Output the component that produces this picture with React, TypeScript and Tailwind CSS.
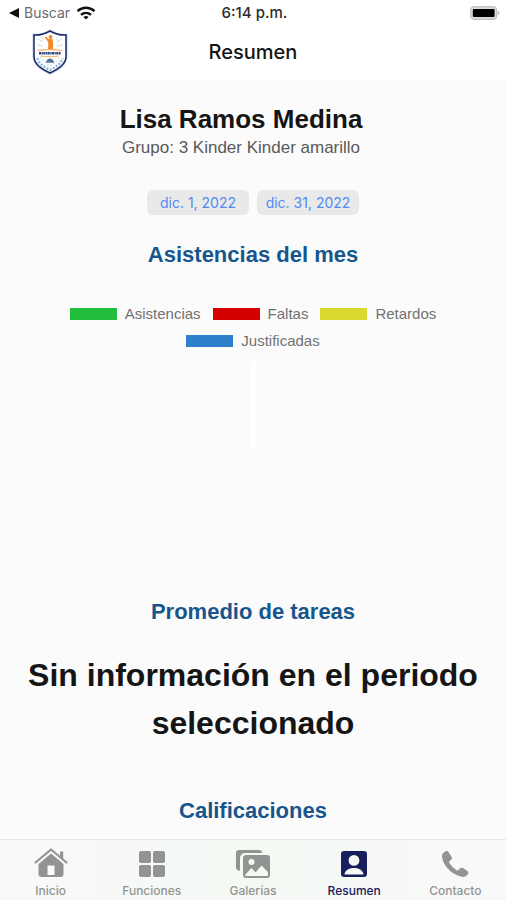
import type { ReactNode } from "react";

const sans = "font-['Liberation_Sans',Arial,sans-serif]";
const system = "font-['Inter','Liberation_Sans',sans-serif]";

function SchoolCrest() {
  return (
    <svg viewBox="0 0 36 46" className="h-[46px] w-9" role="img" aria-label="Escudo escolar">
      <path d="M18 1.5C13.5 4.2 7.5 6 1.5 5.6v22c0 8 7.5 12.5 16.500 17 9-4.500 16.500-9 16.500-17v-22C28.500 6 22.500 4.200 18 1.500Z" fill="#fff" stroke="#c3cbe6" strokeWidth="2" />
      <path d="M18 2C13.500 4.700 7.500 6.300 2 6v21.600C2 35.200 9.200 39.700 18 44c8.800-4.300 16-8.800 16-16.400V6C28.500 6.300 22.500 4.700 18 2Z" fill="none" stroke="#1b2b67" strokeWidth="1.500" />
      <path d="m6 10 5 3M5 16l6 1M30 10l-5 3M31 16l-6 1M9 7l3 4M27 7l-3 4" stroke="#c2dfe8" strokeWidth="1" />
      <path d="M5.500 29c1.500 6 6 8.500 12.500 12 6.500-3.500 11-6 12.500-12" fill="none" stroke="#8db8df" strokeWidth="2.500" strokeDasharray="2 1.500" />
      <path d="M8 27c2 5 5 7 10 9.500 5-2.500 8-4.500 10-9.500" fill="none" stroke="#d5e8ef" strokeWidth="1.500" strokeDasharray="2 1.500" />
      <circle cx="18.500" cy="8" r="1.900" fill="#f28a26" />
      <path d="m13.500 7 3.200 3h3.800c.7 3.300.7 6.800.3 10.800h-5c.6-2.600.6-5.200.2-8L13 8.500Z" fill="#f28a26" />
      <path d="M6 21.700c7-1.200 17-1.200 24 0" fill="none" stroke="#f5ad69" strokeWidth="1.200" />
      <path d="M7 24.300h22" stroke="#34447c" strokeWidth="2.400" strokeDasharray="2.200 .5 1.200 .4" />
      <path d="M9 27c6 1 12 1 18 0" fill="none" stroke="#f5ad69" strokeWidth="1" />
      <path d="M14.500 32.500c.4-4 6.600-4 7 0Z" fill="#4f7899" />
      <path d="M14 33h8" stroke="#1b2b67" strokeWidth="1" />
    </svg>
  );
}

function StatusBar() {
  return (
    <div className={`grid h-[26px] grid-cols-3 items-center pr-[6px] pl-[9px] text-[15px] leading-[26px] ${system}`}>
      <div className="flex items-center gap-[5px] text-[#6b6b6b]">
        <svg viewBox="0 0 10 10" className="size-[10px]" aria-hidden="true">
          <path d="M0 5 10 0v10Z" fill="#111" />
        </svg>
        <span className="text-[14px]">Buscar</span>
        <svg viewBox="0 0 20 14" className="ml-px h-[14px] w-5" fill="none" stroke="#111" strokeWidth="2.400" aria-hidden="true">
          <path d="M1.500 5.200c5-4.600 12-4.600 17 0" />
          <path d="M5 8.900c3-2.700 7-2.700 10 0" />
          <path d="m10 13.500-2.600-2.600c1.500-1.200 3.700-1.200 5.200 0Z" fill="#111" stroke="none" />
        </svg>
      </div>
      <div className="text-center font-medium text-[#2b2b2b]">6:14 p.m.</div>
      <svg viewBox="0 0 30 14" className="h-[14px] w-[30px] justify-self-end" aria-hidden="true">
        <rect x=".7" y=".7" width="26" height="12.600" rx="3.500" fill="#ddd" stroke="#c4c4c4" strokeWidth="1.400" />
        <rect x="2.800" y="3" width="21.800" height="8" rx="1" fill="#000" />
        <path d="M28 4.800c1.800.8 1.800 3.600 0 4.400Z" fill="#bbb" />
      </svg>
    </div>
  );
}

const legend = [
  { label: "Asistencias", color: "bg-[#20be3b]" },
  { label: "Faltas", color: "bg-[#d40000]" },
  { label: "Retardos", color: "bg-[#dada2e]" },
  { label: "Justificadas", color: "bg-[#2d80cc]" },
];

const tabs: { label: string; active?: boolean; icon: ReactNode }[] = [
  {
    label: "Inicio",
    icon: (
      <>
        <path d="M2.500 16.500 18 3.500l15.500 13" fill="none" stroke="currentColor" strokeWidth="2.200" strokeLinecap="round" strokeLinejoin="round" />
        <path d="M27 5.500h3.200v8L27 10.800Z" />
        <path fillRule="evenodd" d="M18 7.500 5.500 18V28c0 2 1 3 3 3h19c2 0 3-1 3-3V18Zm-3.500 12h7V29h-7Z" />
      </>
    ),
  },
  {
    label: "Funciones",
    icon: (
      <>
        <rect x="5" y="5" width="12" height="12" rx="2" />
        <rect x="19" y="5" width="12" height="12" rx="2" />
        <rect x="5" y="19" width="12" height="12" rx="2" />
        <rect x="19" y="19" width="12" height="12" rx="2" />
      </>
    ),
  },
  {
    label: "Galerías",
    icon: (
      <>
        <path d="M4 4h20a3 3 0 0 1 3 3H10a5 5 0 0 0-5 5v12.500a3 3 0 0 1-4-3V7a3 3 0 0 1 3-3Z" />
        <path fillRule="evenodd" d="M11 9h21a3 3 0 0 1 3 3v17a3 3 0 0 1-3 3H11a3 3 0 0 1-3-3V12a3 3 0 0 1 3-3Zm5.500 4a3 3 0 1 0 0 6 3 3 0 0 0 0-6ZM10 29l6.500-7 4 4.500 6-7L33 26v3a1 1 0 0 1-1 1H11Z" />
      </>
    ),
  },
  {
    label: "Resumen",
    active: true,
    icon: (
      <path fillRule="evenodd" d="M8 5h20a3 3 0 0 1 3 3v20a3 3 0 0 1-3 3H8a3 3 0 0 1-3-3V8a3 3 0 0 1 3-3Zm10 4a5.400 5.400 0 1 0 0 10.800A5.400 5.400 0 0 0 18 9ZM8.500 28.500h19c-.5-4-4.200-6.500-9.500-6.500s-9 2.500-9.500 6.500Z" />
    ),
  },
  {
    label: "Contacto",
    icon: (
      <path d="M8.500 5.300c1.300-.7 2.300-.4 3 .7l3 4.700c.8 1.300.6 2.200-.4 3.100l-1.600 1.500c-.5.600-.5 1.100-.1 1.800 2 3 4.200 5.200 7.200 7.100.7.400 1.200.4 1.700-.1l1.700-1.700c.9-.9 1.900-1 3-.3l4.400 2.900c1.200.8 1.400 1.800.6 3-1.600 2.400-3.800 3.300-6.400 2.800C14 28.500 5.500 18.500 5 10.500c-.1-2.300 1.300-4.100 3.500-5.200Z" />
    ),
  },
];

const sectionTitle = "text-center text-[22px] leading-8 font-bold text-[#17568c]";

export default function App() {
  return (
    <div className={`flex h-dvh flex-col bg-[#fbfbfb] text-[#151515] ${sans}`}>
      <header className="shrink-0 bg-white">
        <StatusBar />
        <div className="grid h-[54px] grid-cols-[100px_1fr_100px] items-start">
          <div className="flex justify-center pt-[3px]">
            <SchoolCrest />
          </div>
          <h1 className={`text-center text-[20px] leading-[52px] font-medium ${system}`}>Resumen</h1>
        </div>
      </header>

      <main className="min-h-0 flex-1 overflow-hidden px-4 pt-[22px]">
        <div className="pr-6 text-center">
          <h2 className="text-[26px] leading-[34px] font-bold">Lisa Ramos Medina</h2>
          <p className="text-[17px] leading-6 text-[#595959]">Grupo: 3 Kinder Kinder amarillo</p>
        </div>

        <div className={`mt-[30px] flex justify-center gap-2 text-[14px] text-[#528af2] ${system}`}>
          <button type="button" className="h-[25px] w-[102px] rounded-md bg-[#e9e9ea]">dic. 1, 2022</button>
          <button type="button" className="h-[25px] w-[102px] rounded-md bg-[#e9e9ea]">dic. 31, 2022</button>
        </div>

        <section className="mt-6">
          <h2 className={sectionTitle}>Asistencias del mes</h2>
          <ul className="mx-auto mt-[31px] flex max-w-[400px] flex-wrap justify-center gap-x-3 gap-y-[3px] text-[15px] leading-6 text-[#727272]">
            {legend.map((item) => (
              <li key={item.label} className="flex items-center gap-2">
                <span className={`h-3 w-[47px] ${item.color}`} />
                {item.label}
              </li>
            ))}
          </ul>
          <div className="flex h-[243px] justify-center pt-2">
            <div className="h-[87px] w-[6px] bg-[#fefefe]" />
          </div>
        </section>

        <section>
          <h2 className={sectionTitle}>Promedio de tareas</h2>
          <p className="mt-[23px] text-center text-[32px] leading-[48px] font-bold">Sin información en el periodo seleccionado</p>
        </section>

        <section className="mt-12">
          <h2 className={sectionTitle}>Calificaciones</h2>
        </section>
      </main>

      <nav aria-label="Principal" className={`grid h-[61px] shrink-0 grid-cols-5 border-t border-[#e7e7e7] bg-linear-to-r from-[#f9f9f9] via-[#f4f9f4] to-[#f9f9f9] text-[12px] leading-4 font-medium ${system}`}>
        {tabs.map((tab) => (
          <button
            key={tab.label}
            type="button"
            aria-current={tab.active ? "page" : undefined}
            className={`flex flex-col items-center gap-px pt-[6px] ${tab.active ? "text-[#17205d]" : "text-[#929492]"}`}
          >
            <svg viewBox="0 0 36 36" className="size-9" fill="currentColor" aria-hidden="true">
              {tab.icon}
            </svg>
            <span>{tab.label}</span>
          </button>
        ))}
      </nav>
    </div>
  );
}
